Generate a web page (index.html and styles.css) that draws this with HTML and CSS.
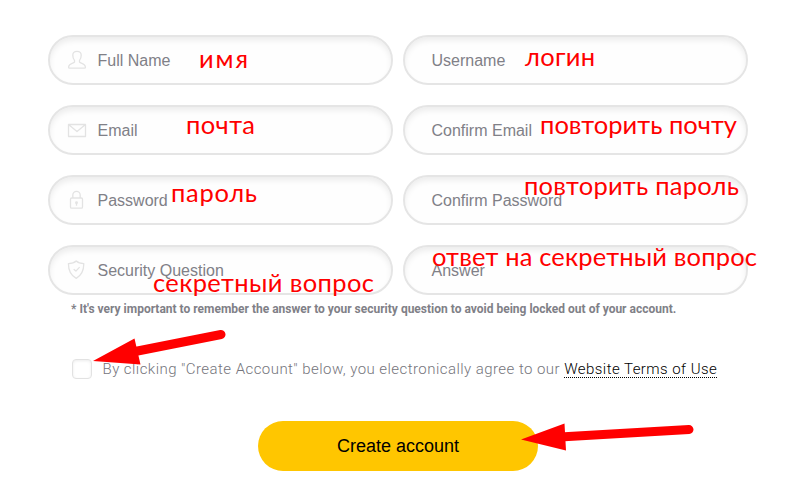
FILE: index.html
```
<!DOCTYPE html>
<html lang="en">
<head>
<meta charset="utf-8">
<title>Create account</title>
<link rel="stylesheet" href="styles.css">
</head>
<body>
<form class="signup">
  <div class="fields">
    <label class="field"><svg class="icon" viewBox="0 0 20 20"><path d="M7.500 12v-1.600C6 8.800 5.800 7 5.800 5.200 5.800 2.800 7.400 1.300 10 1.300s4.200 1.500 4.200 3.900c0 1.800-.2 3.600-1.700 5.200V12c.4 1.300 5.900 1.300 5.900 5.200 0 .7-.4 1-1 1H2.600c-.6 0-1-.3-1-1 0-3.900 5.500-3.900 5.900-5.200z"/></svg><span>Full Name</span></label>
    <label class="field plain"><span>Username</span></label>
    <label class="field"><svg class="icon" viewBox="0 0 20 20"><path d="M1.500 4.500h17v12h-17zM1.800 4.800 10 11.500l8.200-6.700"/></svg><span>Email</span></label>
    <label class="field plain"><span>Confirm Email</span></label>
    <label class="field"><svg class="icon" viewBox="0 0 20 20"><rect x="3.500" y="8" width="12" height="10.200" rx="1.200"/><path d="M5.800 8V5a3.700 3.700 0 0 1 7.400 0v3M9.500 13.500v2.300"/><circle cx="9.500" cy="12.800" r=".8"/></svg><span>Password</span></label>
    <label class="field plain"><span>Confirm Password</span></label>
    <label class="field"><svg class="icon" viewBox="0 0 20 20"><path d="M9.200 1c1.600 1.600 4.400 2.600 7.600 2.600C16.800 10.500 14.700 15.500 9.200 18.300 3.700 15.500 1.400 10.500 1.400 3.600 4.800 3.600 7.600 2.600 9.200 1zM6.700 9.200l2.200 1.900 3.700-4"/></svg><span>Security Question</span></label>
    <label class="field plain"><span>Answer</span></label>
  </div>
  <p class="hint">* It's very important to remember the answer to your security question to avoid being locked out of your account.</p>
  <div class="terms">
    <span class="checkbox"></span>
    <span class="agree">By clicking "Create Account" below, you electronically agree to our <a class="link">Website Terms of Use</a></span>
  </div>
  <button class="submit" type="button">Create account</button>
</form>
<svg class="notes" viewBox="0 0 796 504" lang="ru">
  <text x="199" y="68" textLength="49">имя</text>
  <text x="525" y="66" textLength="70">логин</text>
  <text x="186" y="134" textLength="69">почта</text>
  <text x="540" y="134" textLength="197">повторить почту</text>
  <text x="171" y="202" textLength="86">пароль</text>
  <text x="524" y="195" textLength="215">повторить пароль</text>
  <text x="432" y="266" textLength="325">ответ на секретный вопрос</text>
  <text x="153" y="292" textLength="221">секретный вопрос</text>
  <path class="shaft" d="M221 334.500 130 352.500M689 429.500 560 437"/>
  <path class="head" d="M93 361 134.500 338.500 140.500 364.500zM521 439.500 564.500 423.500 566 450.500z"/>
</svg>
</body>
</html>
```

FILE: styles.css
```
body {
  margin: 0;
  width: 796px;
  height: 504px;
  overflow: hidden;
  background: #fff;
  position: relative;
}

.signup {
  display: flex;
  flex-direction: column;
  width: 700px;
  padding: 35px 48px 0;
}

.fields {
  display: grid;
  grid-template-columns: 345px 345px;
  gap: 20px 10px;
}

.field {
  box-sizing: border-box;
  display: flex;
  align-items: center;
  height: 50px;
  padding-left: 17px;
  border: 2px solid #e5e5e5;
  border-radius: 25px;
  background: #fefefe;
  box-shadow: inset 0 4px 6px -1px rgba(0, 0, 0, 0.08);
  font: 16px "Liberation Sans", sans-serif;
  color: #808087;
}

.field span {
  padding-top: 2px;
}

.plain {
  padding-left: 26.5px;
}

.icon {
  width: 20px;
  height: 20px;
  margin-right: 10.5px;
  fill: none;
  stroke: #e3e3e3;
  stroke-width: 1.3;
  stroke-linejoin: round;
}

.hint {
  margin: 7px 0 0 23px;
  font: 700 12px/15px Roboto, sans-serif;
  color: #808087;
  white-space: nowrap;
}

.terms {
  display: flex;
  align-items: center;
  gap: 10.5px;
  margin: 42px 0 0 24px;
  height: 20px;
}

.checkbox {
  box-sizing: border-box;
  width: 20px;
  height: 20px;
  border: 1px solid #e2e2e2;
  border-radius: 4px;
  background: #fff;
  box-shadow: inset 0 1px 3px rgba(0, 0, 0, 0.08);
}

.agree {
  font: 300 15px/18px Roboto, sans-serif;
  letter-spacing: 0.45px;
  color: #75757c;
  white-space: nowrap;
}

.link {
  display: inline-block;
  line-height: 16px;
  border-bottom: 1px dotted #000;
  color: #000;
}

.submit {
  align-self: center;
  width: 280px;
  height: 50px;
  margin-top: 42px;
  border: 0;
  border-radius: 25px;
  background: #ffc600;
  color: #000;
  font: 18px "Liberation Sans", sans-serif;
}

.notes {
  position: absolute;
  top: 0;
  left: 0;
  width: 796px;
  height: 504px;
  fill: #f00;
  font: 25.5px Lato, sans-serif;
  pointer-events: none;
}

.shaft {
  fill: none;
  stroke: #f00;
  stroke-width: 9;
  stroke-linecap: round;
}
```
